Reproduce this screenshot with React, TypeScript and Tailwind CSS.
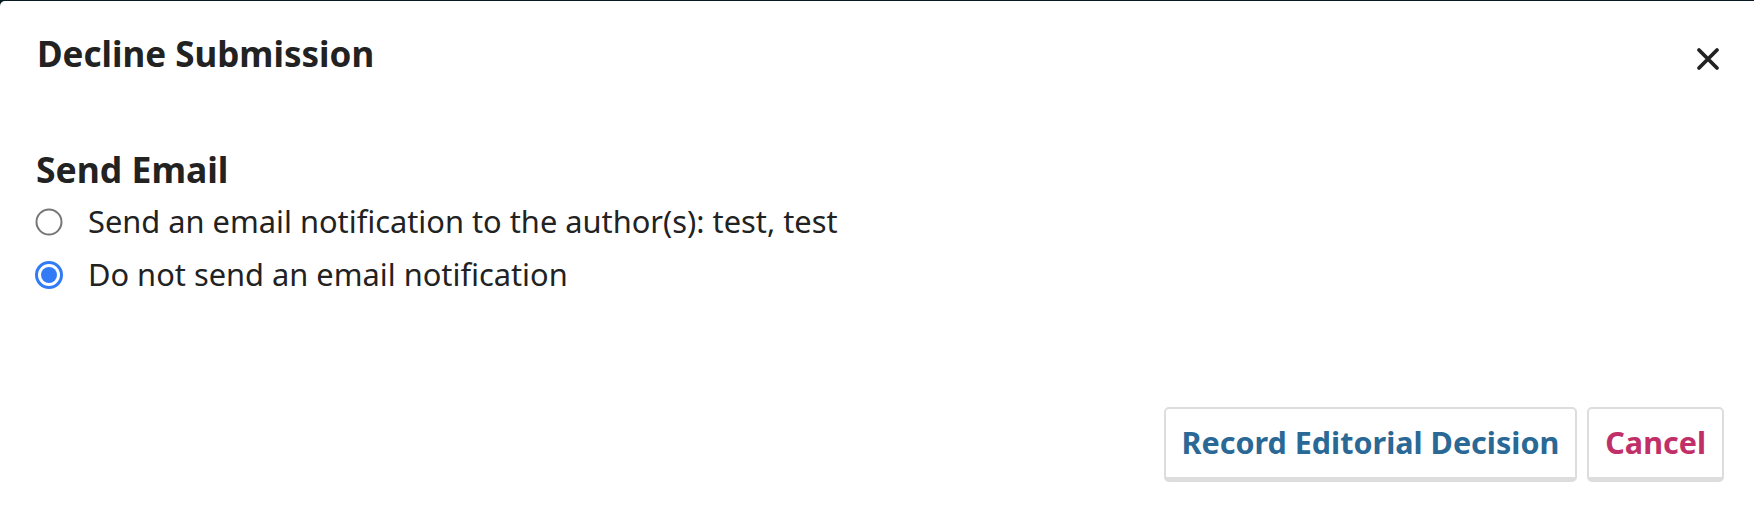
import { useState } from 'react'

function Radio({ checked }: { checked: boolean }) {
  return (
    <svg className="w-[28px] h-[28px] shrink-0" viewBox="0 0 28 28">
      {checked ? (
        <>
          <circle cx="14" cy="14" r="12.5" fill="white" stroke="#317cf6" strokeWidth="3" />
          <circle cx="14" cy="14" r="8" fill="#317cf6" />
        </>
      ) : (
        <circle cx="14" cy="14" r="12.5" fill="white" stroke="#767676" strokeWidth="2" />
      )}
    </svg>
  )
}

export default function App() {
  const [sendEmail, setSendEmail] = useState(false)

  return (
    <div className="h-[510px] w-full overflow-hidden bg-[#071a22] pt-px font-['Noto_Sans',sans-serif] text-[#222]">
      <div className="h-full bg-white rounded-tl-[5px] flex flex-col">
        <div className="flex items-center justify-between pl-[37px] pr-[34px] pt-[31px]">
          <h1 className="text-[35px] leading-[44px] font-bold">Decline Submission</h1>
          <button className="w-[24px] h-[24px] flex items-center justify-center mt-[10px]">
            <svg viewBox="0 0 24 24" className="w-[24px] h-[24px]" fill="none" stroke="#222" strokeWidth="3.8" strokeLinecap="round">
              <path d="M3 3L21 21M21 3L3 21" />
            </svg>
          </button>
        </div>

        <div className="pl-[35px] pt-[71px]">
          <h2 className="text-[35.5px] leading-[44px] font-bold pl-[1px]">Send Email</h2>
          <div className="flex flex-col gap-[10px] mt-[9px]">
            <label className="flex items-center gap-[25px] cursor-pointer" onClick={() => setSendEmail(true)}>
              <Radio checked={sendEmail} />
              <span className="text-[30.8px] leading-[43px]">Send an email notification to the author(s): test, test</span>
            </label>
            <label className="flex items-center gap-[25px] cursor-pointer" onClick={() => setSendEmail(false)}>
              <Radio checked={!sendEmail} />
              <span className="text-[30.8px] leading-[43px]">Do not send an email notification</span>
            </label>
          </div>
        </div>

        <div className="mt-auto mb-[28px] flex justify-end gap-[10px] pr-[30px]">
          <button className="h-[75px] px-[16px] rounded-[5px] border-2 border-[#ddd] border-b-[5px] bg-white text-[30.5px] font-bold text-[#2a6896]">
            Record Editorial Decision
          </button>
          <button className="h-[75px] px-[16px] rounded-[5px] border-2 border-[#ddd] border-b-[5px] bg-white text-[30.5px] font-bold text-[#c12f68]">
            Cancel
          </button>
        </div>
      </div>
    </div>
  )
}
